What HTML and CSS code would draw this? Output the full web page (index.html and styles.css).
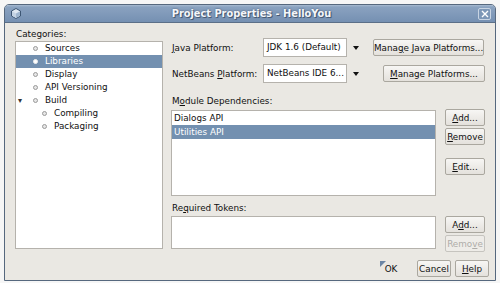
FILE: index.html
```html
<!DOCTYPE html>
<html lang="en">
<head>
    <meta charset="UTF-8">
    <title>Project Properties - HelloYou</title>
    <link rel="stylesheet" href="styles.css">
</head>
<body>
    <div class="window">
        <div class="titlebar">
            <svg class="app-icon" width="10" height="11" viewBox="0 0 10 11">
                <polygon points="5,0.5 9.5,3 9.5,8 5,10.5 0.5,8 0.5,3" fill="#dfe8f2" stroke="#3d5673" stroke-width="1"/>
                <polygon points="5,5.5 9,3.2 9,7.8 5,10" fill="#9fb6d0"/>
                <polygon points="5,5.5 1,3.2 1,7.8 5,10" fill="#c4d3e4"/>
            </svg>
            <span class="title">Project Properties - HelloYou</span>
            <span class="close-btn">
                <svg width="8" height="8" viewBox="0 0 8 8"><path d="M1 1 L7 7 M7 1 L1 7" stroke="#fff" stroke-width="1.4"/></svg>
            </span>
        </div>

        <div class="content">
            <div class="main">
                <div class="left">
                    <div class="label">Categories:</div>
                    <div class="tree">
                        <div class="node"><span class="dot"></span>Sources</div>
                        <div class="node selected"><span class="dot"></span>Libraries</div>
                        <div class="node"><span class="dot"></span>Display</div>
                        <div class="node"><span class="dot"></span>API Versioning</div>
                        <div class="node"><span class="expander">&#9662;</span><span class="dot"></span>Build</div>
                        <div class="node child"><span class="dot"></span>Compiling</div>
                        <div class="node child"><span class="dot"></span>Packaging</div>
                    </div>
                </div>

                <div class="right">
                    <div class="platforms">
                        <label class="plabel"><u>J</u>ava Platform:</label>
                        <div class="combo">JDK 1.6 (Default)</div>
                        <span class="arrow"></span>
                        <button class="btn wide">Mana<u>g</u>e Java Platforms...</button>

                        <label class="plabel">NetBeans <u>P</u>latform:</label>
                        <div class="combo">NetBeans IDE 6...</div>
                        <span class="arrow"></span>
                        <button class="btn mid"><u>M</u>anage Platforms...</button>
                    </div>

                    <div class="label deps-label">M<u>o</u>dule Dependencies:</div>
                    <div class="list-row">
                        <div class="list deps">
                            <div class="item">Dialogs API</div>
                            <div class="item selected">Utilities API</div>
                        </div>
                        <div class="side-btns">
                            <button class="btn small"><u>A</u>dd...</button>
                            <button class="btn small"><u>R</u>emove</button>
                            <button class="btn small edit"><u>E</u>dit...</button>
                        </div>
                    </div>

                    <div class="label tokens-label">Re<u>q</u>uired Tokens:</div>
                    <div class="list-row">
                        <div class="list tokens"></div>
                        <div class="side-btns">
                            <button class="btn small">A<u>d</u>d...</button>
                            <button class="btn small" disabled>Remo<u>v</u>e</button>
                        </div>
                    </div>
                </div>
            </div>

            <div class="footer">
                <button class="btn ok">OK</button>
                <button class="btn cancel">Cancel</button>
                <button class="btn help"><u>H</u>elp</button>
            </div>
        </div>
    </div>
</body>
</html>
```

FILE: styles.css
```css
body {
    margin: 0;
    background-color: #f6f6f6;
    font-family: "DejaVu Sans", sans-serif;
    font-size: 8.8px;
    color: #101010;
}
u {
    text-decoration-thickness: 1px;
    text-underline-offset: 1px;
}
.window {
    margin: 4px 0 0 4px;
    width: 490px;
    height: 275px;
    border: 1px solid #56687e;
    border-radius: 5px 5px 0 0;
    background-color: #eae8e3;
    display: flex;
    flex-direction: column;
    overflow: hidden;
}
.titlebar {
    height: 17px;
    flex: none;
    display: flex;
    align-items: center;
    padding: 0 4px 0 6px;
    background: linear-gradient(#a9bbd1 0, #8aa2c0 2px, #7590b2 100%);
    border-bottom: 1px solid #5b6f88;
}
.app-icon {
    flex: none;
}
.title {
    flex: 1;
    text-align: center;
    color: #f4f6fa;
    font-weight: bold;
    font-size: 9.8px;
    text-shadow: 0 0 2px #3c4e66, 1px 1px 0 #4b5f79;
    padding-left: 4px;
}
.close-btn {
    width: 11px;
    height: 10px;
    border: 1px solid #c8d4e3;
    border-radius: 2px;
    display: flex;
    align-items: center;
    justify-content: center;
    background-color: #7d97b7;
}
.content {
    flex: 1;
    display: flex;
    flex-direction: column;
    padding: 0 10px 0 10px;
}
.main {
    display: flex;
    gap: 8px;
}
.label {
    line-height: 12px;
    padding-left: 1px;
}
.left {
    width: 148px;
    padding-top: 5px;
}
.tree {
    margin-top: 1px;
    height: 206px;
    background-color: #fff;
    border: 1px solid #b5b2ac;
}
.node {
    height: 13px;
    line-height: 13px;
    display: flex;
    align-items: center;
    padding-left: 17px;
    position: relative;
}
.node.child {
    padding-left: 26px;
}
.node.selected {
    background-color: #7390b0;
    color: #fff;
}
.dot {
    width: 3px;
    height: 3px;
    border-radius: 50%;
    border: 1px solid #9a9a9a;
    background-color: #e6e6e6;
    margin-right: 7px;
}
.node.selected .dot {
    border-color: #f0f0f0;
    background-color: #fff;
}
.expander {
    position: absolute;
    left: 2px;
    font-size: 8px;
    color: #333;
}
.right {
    width: 314px;
}
.platforms {
    margin-top: 15px;
    display: grid;
    grid-template-columns: 92px 84px 26px 112px;
    row-gap: 7px;
    align-items: center;
}
.plabel {
    padding-left: 1px;
}
.combo {
    height: 17px;
    line-height: 17px;
    background-color: #fff;
    border: 1px solid #b5b2ac;
    padding-left: 3px;
    white-space: nowrap;
    overflow: hidden;
}
.arrow {
    width: 0;
    height: 0;
    margin-left: 6px;
    border-left: 3.5px solid transparent;
    border-right: 3.5px solid transparent;
    border-top: 4px solid #111;
}
.btn {
    font-family: inherit;
    font-size: 8.8px;
    color: #101010;
    height: 17px;
    padding: 0;
    border: 1px solid #aaa79f;
    border-radius: 2px;
    background: linear-gradient(#f7f6f4, #e4e1dc);
    white-space: nowrap;
}
.btn:disabled {
    color: #aeaca8;
    border-color: #c6c4bf;
    background: #eeece8;
}
.btn.wide {
    width: 111px;
}
.btn.mid {
    width: 102px;
    justify-self: end;
}
.deps-label {
    margin-top: 12px;
}
.list-row {
    display: flex;
    gap: 9px;
}
.list {
    width: 263px;
    background-color: #fff;
    border: 1px solid #b5b2ac;
}
.deps {
    margin-top: 3px;
    height: 84px;
}
.item {
    height: 14px;
    line-height: 14px;
    padding-left: 2px;
}
.item.selected {
    background-color: #7390b0;
    color: #fff;
}
.side-btns {
    display: flex;
    flex-direction: column;
    gap: 2px;
    margin-top: 2px;
}
.btn.small {
    width: 40px;
}
.btn.edit {
    margin-top: 11px;
}
.tokens-label {
    margin-top: 6px;
}
.tokens {
    margin-top: 2px;
    height: 31px;
}
.footer {
    margin-top: 8px;
    margin-right: -4px;
    display: flex;
    justify-content: flex-end;
    gap: 4px;
}
.btn.cancel,
.btn.help {
    width: 34px;
}
.btn.ok {
    width: 24px;
    border-color: transparent;
    background: transparent;
    position: relative;
    margin-right: 10px;
}
.btn.ok::before {
    content: "";
    position: absolute;
    left: 0;
    top: 0;
    border-top: 6px solid #6b86a6;
    border-right: 6px solid transparent;
}
```
